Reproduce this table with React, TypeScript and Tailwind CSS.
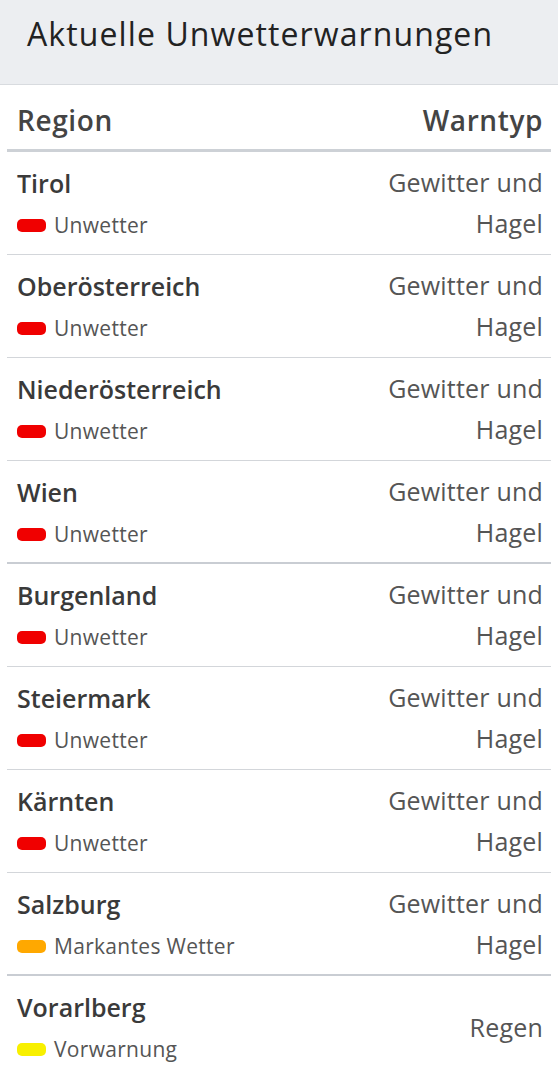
import React from "react";

type Row = { region: string; level: "red" | "orange" | "yellow"; label: string; typ: string; thick?: boolean };

const rows: Row[] = [
  { region: "Tirol", level: "red", label: "Unwetter", typ: "Gewitter und Hagel" },
  { region: "Oberösterreich", level: "red", label: "Unwetter", typ: "Gewitter und Hagel" },
  { region: "Niederösterreich", level: "red", label: "Unwetter", typ: "Gewitter und Hagel" },
  { region: "Wien", level: "red", label: "Unwetter", typ: "Gewitter und Hagel", thick: true },
  { region: "Burgenland", level: "red", label: "Unwetter", typ: "Gewitter und Hagel" },
  { region: "Steiermark", level: "red", label: "Unwetter", typ: "Gewitter und Hagel" },
  { region: "Kärnten", level: "red", label: "Unwetter", typ: "Gewitter und Hagel" },
  { region: "Salzburg", level: "orange", label: "Markantes Wetter", typ: "Gewitter und Hagel", thick: true },
  { region: "Vorarlberg", level: "yellow", label: "Vorwarnung", typ: "Regen" },
];

function Badge({ level }: { level: Row["level"] }) {
  const cls =
    level === "red" ? "bg-[#f00000]" : level === "orange" ? "bg-[#ffa800]" : "bg-[#f8f000]";
  return <span className={`inline-block w-[29px] h-[13px] rounded-[5px] ${cls}`} />;
}

export default function App() {
  return (
    <div className="w-[558px] min-h-[1071px] bg-white font-['Open_Sans',sans-serif]">
      <div className="h-[85px] bg-[#eceef1] border-b border-[#d8dbdf] flex items-center pl-[27px] pb-[16px]">
        <h1 className="text-[32px] text-[#222] tracking-[1.1px]">Aktuelle Unwetterwarnungen</h1>
      </div>
      <div className="px-[7px]">
        <div className="flex justify-between items-center h-[67px] pt-[6px] pl-[10px] pr-[8px] border-b-[3px] border-[#cdd1d6]">
          <span className="text-[28px] font-semibold text-[#444] tracking-[0.6px]">Region</span>
          <span className="text-[28px] font-semibold text-[#444] tracking-[0.6px]">Warntyp</span>
        </div>
        {rows.map((r, i) => (
          <div
            key={r.region}
            className={`flex justify-between items-center pt-[10px] pl-[10px] pr-[8px] ${
              i === rows.length - 1
                ? "pb-[10px]"
                : r.thick
                ? "pb-[9px] border-b-2 border-[#c9cdd3]"
                : "pb-[10px] border-b border-[#d3d6da]"
            }`}
          >
            <div className="flex flex-col">
              <span className="text-[25px] leading-[42px] font-semibold text-[#3a3a3a]">{r.region}</span>
              <span className="flex items-center gap-[8px] h-[40px] pt-[2px]">
                <Badge level={r.level} />
                <span className="text-[21px] leading-[38px] text-[#555] tracking-[0.3px]">{r.label}</span>
              </span>
            </div>
            <div className="text-right text-[25px] leading-[41px] text-[#555] w-[190px] tracking-[0.2px]">{r.typ}</div>
          </div>
        ))}
      </div>
    </div>
  );
}
